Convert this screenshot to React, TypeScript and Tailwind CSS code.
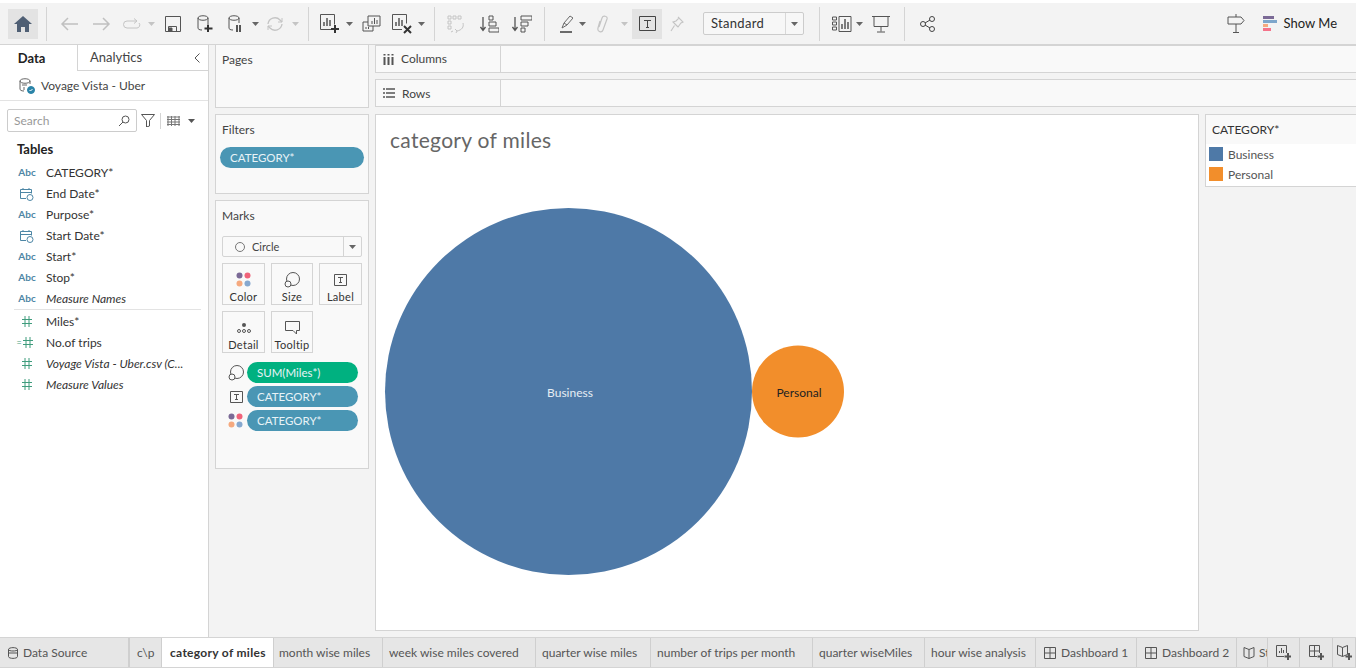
import { ReactNode } from "react";

const font = "font-['Lato','Open_Sans',sans-serif]";

const Caret = ({ className = "" }: { className?: string }) => (
    <svg width="7" height="4" viewBox="0 0 7 4" className={className}>
        <path d="M0 0h7L3.5 4z" fill="currentColor" />
    </svg>
);

const Ico = ({ w = 20, h = 20, className = "", children }: { w?: number; h?: number; className?: string; children: ReactNode }) => (
    <svg width={w} height={h} viewBox={`0 0 ${w} ${h}`} fill="none" stroke="currentColor" strokeWidth="1" className={`shrink-0 ${className}`}>
        {children}
    </svg>
);

const Sep = ({ className = "" }: { className?: string }) => <div className={`h-[34px] w-px shrink-0 bg-[#d4d4d4] ${className}`} />;

const Toolbar = () => (
    <div className="flex h-[42px] shrink-0 items-center border-b border-[#d4d4d4] bg-[#f3f3f3] text-[#555]">
        <div className="ml-[8px] flex h-[30px] w-[30px] items-center justify-center bg-[#e3e3e3] text-[#4f5f74]">
            <svg width="18" height="16" viewBox="0 0 18 16" fill="currentColor"><path d="M9 0L0 8h3v8h4v-5h4v5h4V8h3z" /></svg>
        </div>
        <Sep className="ml-[8px]" />
        <Ico w={18} h={14} className="ml-[13px] text-[#c0c0c0]"><path d="M18 7H2M8 1L2 7l6 6" strokeWidth="1.5" /></Ico>
        <Ico w={18} h={14} className="ml-[15px] text-[#c0c0c0]"><path d="M0 7h16M10 1l6 6-6 6" strokeWidth="1.5" /></Ico>
        <Ico w={18} h={12} className="ml-[12px] text-[#c4c4c4]"><path d="M13 3H4a3 3 0 000 7h10a3 3 0 002-5M11 .5L14 3l-3 2.5" /></Ico>
        <Caret className="ml-[7px] text-[#c4c4c4]" />
        <Ico w={16} h={16} className="ml-[10px] text-[#555]"><path d="M.5.5h15v15H.5zM3.5 15.5v-5h8v5" /><path d="M4 12h3v3H4z" fill="currentColor" /></Ico>
        <Ico w={16} h={18} className="ml-[16px] text-[#555]"><path d="M1 3c0-3 10-3 10 0v7M1 3c0 3 10 3 10 0M1 3v10c0 1 1 2 4 2" /><path d="M11 10v7M7.500 13.500h8" strokeWidth="2" className="text-[#333]" /></Ico>
        <Ico w={16} h={18} className="ml-[15px] text-[#555]"><path d="M1 3c0-3 10-3 10 0v5M1 3c0 3 10 3 10 0M1 3v10c0 1 1 2 4 2" /><path d="M9 10v7M12 10v7" strokeWidth="2" /></Ico>
        <Caret className="ml-[8px] text-[#666]" />
        <Ico w={18} h={16} className="ml-[7px] text-[#c4c4c4]"><path d="M2 8a7 7 0 0112-4l2 2M16 8a7 7 0 01-12 4l-2-2" strokeWidth="1.300" /><path d="M16 2v4h-4M2 14v-4h4" /></Ico>
        <Caret className="ml-[8px] text-[#c4c4c4]" />
        <Sep className="ml-[9px]" />
        <Ico w={20} h={20} className="ml-[11px] text-[#555]"><path d="M11 15.500H.5V.5h14v10" /><path d="M4 12V8M7 12V4M10 12V6" strokeWidth="1.500" /><path d="M15 11v8M11 15h8" strokeWidth="2" className="text-[#333]" /></Ico>
        <Caret className="ml-[6px] text-[#666]" />
        <Ico w={19} h={18} className="ml-[9px] text-[#555]"><path d="M6 11V1h12v10zM6 7H1v9h10v-5" /><path d="M10 9V6M12.500 9V3M15 9V5M4 14v-2M6.500 14v-2" /></Ico>
        <Ico w={20} h={20} className="ml-[11px] text-[#555]"><path d="M10 15.500H.5V.5h14v9" /><path d="M4 12V8M7 12V4M10 12V6" strokeWidth="1.500" /><path d="M12 12l7 7M19 12l-7 7" strokeWidth="2" className="text-[#333]" /></Ico>
        <Caret className="ml-[6px] text-[#666]" />
        <Sep className="ml-[9px]" />
        <Ico w={18} h={18} className="ml-[12px] text-[#c4c4c4]"><path d="M1 1h3v3H1zM6 1h3v3H6zM11 1h3v3h-3zM1 6h3v3H1zM1 11h3v3H1z" /><path d="M16 8c1 4-1 7-6 8M8 14l2 2-1 2M4 17l2-1" /></Ico>
        <Ico w={19} h={18} className="ml-[15px] text-[#555]"><path d="M3 2v13M.5 12L3 15.500 5.500 12" strokeWidth="1.300" /><path d="M9 1h4v4H9zM9 7h7v4H9zM9 13h10v4H9z" /></Ico>
        <Ico w={20} h={18} className="ml-[13px] text-[#555]"><path d="M3 2v13M.5 12L3 15.500 5.500 12" strokeWidth="1.300" /><path d="M9 1h11v4H9zM9 7h7v4H9zM9 13h4v4H9z" /></Ico>
        <Sep className="ml-[12px]" />
        <Ico w={13} h={18} className="ml-[15px] text-[#6a6a6a]"><path d="M2 13l2-5 6-7 3 2-6 7zM4 8l3 2" /><path d="M0 17h12" strokeWidth="2" /></Ico>
        <Caret className="ml-[6px] text-[#666]" />
        <Ico w={13} h={18} className="ml-[10px] text-[#c4c4c4]"><path d="M4 6l-2 7c-1 4 4 5 5 2l4-11c1-3-4-4-5-1L3 12" strokeWidth="1.200" /></Ico>
        <Caret className="ml-[12px] text-[#c4c4c4]" />
        <div className="ml-[4px] flex h-[30px] w-[30px] items-center justify-center bg-[#e3e3e3] text-[#444]">
            <Ico w={17} h={15}><path d="M.5.500h16v14H.5z" /><path d="M5 4.500h7M8.500 4.500v7M7 11.500h3" /></Ico>
        </div>
        <Ico w={14} h={16} className="ml-[8px] text-[#c4c4c4]"><path d="M8 1l5 5-2 1-3 4-1-1-1-1-3-3 3-1 3-3zM4.500 9.500L1 15" strokeWidth="1.100" /></Ico>
        <div className="ml-[19px] flex h-[23px] w-[101px] items-center rounded-[2px] border border-[#ccc] bg-[#f7f7f7] text-[13px] tracking-[0.3px] text-[#333]">
            <span className="flex-1 pl-[7px] pt-[1px]">Standard</span>
            <div className="flex h-full w-[18px] items-center justify-center border-l border-[#d8d8d8] text-[#666]"><Caret /></div>
        </div>
        <Sep className="ml-[15px]" />
        <Ico w={20} h={16} className="ml-[12px] text-[#555]"><path d="M.5 1h4v3h-4zM.5 6h4v3h-4zM.5 11h4v3h-4zM7 .5h12v15H7z" /><path d="M10 13V8M13 13V3M16 13V6" strokeWidth="1.500" /></Ico>
        <Caret className="ml-[4px] text-[#666]" />
        <Ico w={18} h={18} className="ml-[9px] text-[#555]"><path d="M0 1.500h18M2 1.500v10h14v-10M9 11.500v5M5 17h8" /></Ico>
        <Sep className="ml-[14px]" />
        <Ico w={15} h={16} className="ml-[15px] text-[#444]"><circle cx="3" cy="8" r="2.500" /><circle cx="12" cy="3" r="2.500" /><circle cx="12" cy="13" r="2.500" /><path d="M5 7l5-3M5 9l5 3" /></Ico>
        <div className="flex-1" />
        <Ico w={18} h={19} className="text-[#555]"><path d="M1 3h13l3 3.500L14 10H1zM9 0v3M9 10v8M6 18.500h6" /></Ico>
        <svg width="14" height="16" viewBox="0 0 14 16" className="ml-[18px] shrink-0">
            <rect width="11" height="3" fill="#7b6a96" />
            <rect y="4" width="14" height="3" fill="#7ea6cb" />
            <rect y="8" width="5" height="3" fill="#f5a97f" />
            <rect y="12" width="8" height="3" fill="#f5738a" />
        </svg>
        <span className="ml-[7px] mr-[19px] pt-[1px] text-[13px] text-[#222]">Show Me</span>
    </div>
);

const Field = ({ kind, label, italic }: { kind: "abc" | "date" | "num" | "calc"; label: string; italic?: boolean }) => (
    <div className="flex h-[21px] items-center">
        <div className="flex w-[46px] shrink-0 justify-center pl-[16px] pr-[8px]">
            {kind === "abc" && <span className="text-[10px] font-bold text-[#4d86a5]">Abc</span>}
            {kind === "date" && (
                <Ico w={14} h={14} className="text-[#4d86a5]"><path d="M6 11.500H.5v-9h11v4M.5 5.500h11M3 1v2M9 1v2" /><circle cx="10" cy="10.500" r="3" /></Ico>
            )}
            {(kind === "num" || kind === "calc") && (
                <div className={`flex items-center ${kind === "calc" ? "-ml-[5px]" : ""}`}>
                    {kind === "calc" && <span className="mr-px text-[9px] leading-none text-[#3f9c7d]">=</span>}
                    <Ico w={10} h={11} className="text-[#3f9c7d]"><path d="M3 0v11M7 0v11M0 3.500h10M0 7.500h10" /></Ico>
                </div>
            )}
        </div>
        <span className={`truncate text-[12px] text-[#333] ${italic ? "italic" : ""}`}>{label}</span>
    </div>
);

const Sidebar = () => (
    <div className="flex w-[209px] shrink-0 flex-col border-r border-[#d4d4d4] bg-white">
        <div className="flex h-[26px] shrink-0 items-center">
            <div className="flex h-full w-[77px] items-center justify-center pr-[14px] pt-[1px] text-[13px] font-bold text-[#222]">Data</div>
            <div className="flex h-full flex-1 items-center justify-between border-b border-l border-[#d4d4d4] pl-[12px] pr-[8px] pt-[1px] text-[13px] text-[#444]">
                Analytics
                <Ico w={6} h={10} className="text-[#555]"><path d="M5.500 .5L1 5l4.500 4.500" /></Ico>
            </div>
        </div>
        <div className="flex h-[30px] shrink-0 items-center border-b border-[#e3e3e3] pl-[19px]">
            <Ico w={16} h={16} className="text-[#666]">
                <path d="M1 3c0-3 10-3 10 0M1 3c0 3 10 3 10 0v3M1 3v8c0 1 1 2 4 2M3 7h5M5 9v3" />
                <circle cx="12" cy="12" r="3.500" fill="#2b84a8" stroke="#2b84a8" />
                <path d="M10.500 12l1 1 2-2" stroke="#fff" />
            </Ico>
            <span className="ml-[6px] text-[12px] text-[#444]">Voyage Vista - Uber</span>
        </div>
        <div className="mt-[8px] flex h-[23px] shrink-0 items-center">
            <div className="ml-[7px] flex h-full w-[130px] items-center justify-between rounded-[2px] border border-[#ccc] pl-[6px] pr-[6px] text-[12px] text-[#999]">
                Search
                <Ico w={12} h={12} className="text-[#555]"><circle cx="7.500" cy="4.500" r="3.500" /><path d="M5 7l-4 4" /></Ico>
            </div>
            <Ico w={14} h={13} className="ml-[4px] text-[#555]"><path d="M.5 .5h13L8.500 6.500V12l-3 1V6.500z" /></Ico>
            <div className="ml-[5px] h-[16px] w-px bg-[#d4d4d4]" />
            <Ico w={13} h={10} className="ml-[6px] text-[#777]"><path d="M0 1h13M0 3.500h13M0 6h13M0 8.500h13M1 0v10M4.500 0v10M8 0v10M12 0v10" /></Ico>
            <Caret className="ml-[8px] text-[#555]" />
        </div>
        <div className="mt-[7px] pl-[17px] text-[13px] font-bold leading-[20px] text-[#222]">Tables</div>
        <div className="mt-[3px]">
            <Field kind="abc" label="CATEGORY*" />
            <Field kind="date" label="End Date*" />
            <Field kind="abc" label="Purpose*" />
            <Field kind="date" label="Start Date*" />
            <Field kind="abc" label="Start*" />
            <Field kind="abc" label="Stop*" />
            <Field kind="abc" label="Measure Names" italic />
        </div>
        <div className="ml-[14px] mr-[7px] h-px bg-[#e3e3e3]" />
        <div className="mt-px pr-[8px]">
            <Field kind="num" label="Miles*" />
            <Field kind="calc" label="No.of trips" />
            <Field kind="num" label="Voyage Vista - Uber.csv (C..." italic />
            <Field kind="num" label="Measure Values" italic />
        </div>
    </div>
);

const Card = ({ title, className = "", children }: { title: string; className?: string; children?: ReactNode }) => (
    <div className={`shrink-0 border border-[#d4d4d4] bg-[#f9f9f9] ${className}`}>
        <div className="pl-[6px] pt-[6px] text-[12px] leading-[18px] text-[#444]">{title}</div>
        {children}
    </div>
);

const Pill = ({ label, color = "bg-[#4a96b4]", className = "" }: { label: string; color?: string; className?: string }) => (
    <div className={`flex h-[21px] items-center rounded-full pl-[10px] text-[11.5px] text-[#e8f3f7] ${color} ${className}`}>{label}</div>
);

const Dots = () => (
    <svg width="16" height="16" viewBox="0 0 16 16">
        <circle cx="3.500" cy="3.500" r="3" fill="#7b6a96" />
        <circle cx="11.500" cy="3.500" r="3" fill="#f0637a" />
        <circle cx="3.500" cy="11.500" r="3" fill="#f5a97f" />
        <circle cx="11.500" cy="11.500" r="3" fill="#86a8cf" />
    </svg>
);

const SizeIcon = () => (
    <Ico w={16} h={16} className="text-[#555]"><circle cx="9" cy="7" r="6.500" /><circle cx="4" cy="12" r="3" fill="#f9f9f9" /></Ico>
);

const LabelIcon = ({ className = "" }: { className?: string }) => (
    <Ico w={13} h={12} className={`text-[#555] ${className}`}><path d="M.5 .5h12v11H.5z" /><path d="M4 3.500h5M6.500 3.500v5M5 8.500h3" /></Ico>
);

const MarkButton = ({ label, icon, className = "" }: { label: string; icon: ReactNode; className?: string }) => (
    <div className={`flex h-[42px] flex-col items-center justify-end border border-[#d4d4d4] ${className}`}>
        <div className="flex h-[20px] items-center">{icon}</div>
        <span className="text-[11px] leading-[14px] tracking-[0.3px] text-[#333]">{label}</span>
    </div>
);

const Shelves = () => (
    <div className="flex w-[166px] shrink-0 flex-col gap-[6px] bg-[#f3f3f3] px-[6px]">
        <Card title="Pages" className="-mt-px h-[64px]" />
        <Card title="Filters" className="h-[80px]">
            <Pill label="CATEGORY*" className="ml-[4px] mr-[4px] mt-[8px]" />
        </Card>
        <Card title="Marks" className="h-[269px]">
            <div className="mx-[6px] mt-[11px] flex h-[21px] items-center rounded-[2px] border border-[#d4d4d4] bg-[#f9f9f9] text-[11px] text-[#444]">
                <span className="ml-[12px] h-[10px] w-[10px] rounded-full border border-[#777]" />
                <span className="ml-[7px] flex-1 pt-[1px]">Circle</span>
                <div className="flex h-full w-[18px] items-center justify-center border-l border-[#d4d4d4] text-[#666]"><Caret /></div>
            </div>
            <div className="ml-[6px] mt-[6px] grid grid-cols-[43px_42px_43px] gap-x-[6px] gap-y-[6px]">
                <MarkButton label="Color" icon={<Dots />} />
                <MarkButton label="Size" icon={<SizeIcon />} />
                <MarkButton label="Label" icon={<LabelIcon />} />
                <MarkButton
                    label="Detail"
                    icon={
                        <Ico w={14} h={12} className="text-[#555]">
                            <circle cx="7" cy="3" r="2" fill="currentColor" stroke="none" />
                            <circle cx="2" cy="9" r="1.500" /><circle cx="7" cy="9" r="1.500" /><circle cx="12" cy="9" r="1.500" />
                        </Ico>
                    }
                />
                <MarkButton
                    label="Tooltip"
                    icon={<Ico w={15} h={14} className="text-[#555]"><path d="M.5 .5h14v9h-3v3.500L8 9.500H.5z" /></Ico>}
                />
            </div>
            <div className="mt-[9px] flex flex-col gap-[3px]">
                <div className="flex items-center">
                    <div className="flex w-[31px] justify-center pl-[9px]"><SizeIcon /></div>
                    <Pill label="SUM(Miles*)" color="bg-[#00b180]" className="w-[111px]" />
                </div>
                <div className="flex items-center">
                    <div className="flex w-[31px] justify-center pl-[9px]"><LabelIcon /></div>
                    <Pill label="CATEGORY*" className="w-[111px]" />
                </div>
                <div className="flex items-center">
                    <div className="flex w-[31px] justify-center pl-[9px]"><Dots /></div>
                    <Pill label="CATEGORY*" className="w-[111px]" />
                </div>
            </div>
        </Card>
    </div>
);

const Shelf = ({ label, icon, textClass = "" }: { label: string; icon: ReactNode; textClass?: string }) => (
    <div className="flex h-[28px] shrink-0 border-y border-[#d4d4d4] border-l bg-[#f9f9f9]">
        <div className="flex w-[125px] items-center border-r border-[#d4d4d4] pl-[7px] text-[12px] text-[#444]">
            {icon}
            <span className={`ml-[7px] ${textClass}`}>{label}</span>
        </div>
    </div>
);

const Chart = () => (
    <svg viewBox="0 0 822 470" className="block h-[470px] w-[822px] shrink-0">
        <circle cx="192.500" cy="238.500" r="183.500" fill="#4e79a7" />
        <circle cx="422" cy="238.500" r="46" fill="#f28e2b" />
        <text x="194" y="244" textAnchor="middle" fontSize="12" fill="#e6edf4">Business</text>
        <text x="423" y="244" textAnchor="middle" fontSize="12" fill="#222">Personal</text>
    </svg>
);

const Legend = () => (
    <div className="h-[73px] flex-1 border-y border-l border-[#d4d4d4] bg-white">
        <div className="flex h-[29px] items-center bg-[#f9f9f9] pl-[6px] text-[12px] text-[#333]">CATEGORY*</div>
        <div className="mt-[3px] flex h-[20px] items-center pl-[3px] pb-[6px]">
            <span className="h-[14px] w-[14px] bg-[#4e79a7]" />
            <span className="ml-[5px] pt-[1px] text-[12px] text-[#555]">Business</span>
        </div>
        <div className="flex h-[20px] items-center pl-[3px] pb-[6px]">
            <span className="h-[14px] w-[14px] bg-[#f28e2b]" />
            <span className="ml-[5px] pt-[1px] text-[12px] text-[#555]">Personal</span>
        </div>
    </div>
);

const Tab = ({ w, label, icon, active, className = "pl-[6px]" }: { w: string; label: string; icon?: ReactNode; active?: boolean; className?: string }) => (
    <div className={`flex h-full shrink-0 items-center overflow-hidden whitespace-nowrap border-r border-[#cfcfcf] text-[12px] ${w} ${className} ${active ? "bg-white font-bold tracking-[0.3px] text-[#333]" : "text-[#555]"}`}>
        {icon}
        {label}
    </div>
);

const DashIcon = () => (
    <Ico w={12} h={12} className="mr-[5px] text-[#555]"><path d="M.5 .5h11v11H.5zM6 .5v11M.5 6h11" /></Ico>
);

const AddTab = ({ w, children }: { w: string; children: ReactNode }) => (
    <div className={`flex h-full shrink-0 items-center justify-center border-r border-[#cfcfcf] text-[#555] ${w}`}>{children}</div>
);

const TabBar = () => (
    <div className="flex h-[31px] shrink-0 items-stretch overflow-hidden border-y border-[#d4d4d4] bg-[#e6e6e6]">
        <div className="flex w-[130px] shrink-0 items-center border-r-2 border-[#cfcfcf] pl-[8px] text-[12px] text-[#555]">
            <Ico w={10} h={12} className="mr-[5px] text-[#555]"><path d="M.5 2.500c0-2.500 9-2.500 9 0v7c0 2.500-9 2.500-9 0zM.5 2.500c0 2 9 2 9 0M.5 6h9" /></Ico>
            Data Source
        </div>
        <Tab w="w-[32px]" label="c\p" className="pl-[7px]" />
        <Tab w="w-[112px]" label="category of miles" active className="pl-[8px]" />
        <Tab w="w-[109px]" label="month wise miles" className="pl-[5px]" />
        <Tab w="w-[153px]" label="week wise miles covered" />
        <Tab w="w-[115px]" label="quarter wise miles" />
        <Tab w="w-[162px]" label="number of trips per month" />
        <Tab w="w-[112px]" label="quarter wiseMiles" />
        <Tab w="w-[111px]" label="hour wise analysis" />
        <Tab w="w-[101px]" label="Dashboard 1" icon={<DashIcon />} className="pl-[8px]" />
        <Tab w="w-[100px]" label="Dashboard 2" icon={<DashIcon />} className="pl-[8px]" />
        <Tab
            w="w-[31px]"
            label="St"
            icon={<Ico w={12} h={12} className="mr-[4px] shrink-0 text-[#555]"><path d="M6 2.500L1 .5v9l5 2 5-2v-9zM6 2.500v9" /></Ico>}
        />
        <AddTab w="w-[32px]">
            <Ico w={15} h={15}><path d="M8 11.500H.5V.5h10V8" /><path d="M3.500 8V6M5.500 8V3M7.500 8V5" /><path d="M12 8v7M8.500 11.500h7" strokeWidth="2" /></Ico>
        </AddTab>
        <AddTab w="w-[33px]">
            <Ico w={15} h={15}><path d="M8 11.500H.5V.5h10V8M5.500 .5v11M.5 6h10" /><path d="M12 8v7M8.500 11.500h7" strokeWidth="2" /></Ico>
        </AddTab>
        <AddTab w="w-[23px]">
            <Ico w={15} h={15}><path d="M5.500 2.500L.5 .5v9l5 2 5-2v-9zM5.500 2.500v9" /><path d="M12 8v7M8.500 11.500h7" strokeWidth="2" /></Ico>
        </AddTab>
    </div>
);

export default function App() {
    return (
        <div className={`flex h-[668px] w-[1356px] flex-col overflow-hidden bg-[#f3f3f3] ${font}`}>
            <div className="h-[3px] shrink-0 bg-white" />
            <Toolbar />
            <div className="flex min-h-0 flex-1">
                <Sidebar />
                <Shelves />
                <div className="flex min-w-0 flex-1 flex-col gap-[6px]">
                    <Shelf
                        label="Columns"
                        icon={<Ico w={11} h={11} className="text-[#555]"><path d="M1.500 3v8M5.500 3v8M9.500 3v8M1.500 0v1.500M5.500 0v1.500M9.500 0v1.500" strokeWidth="2" /></Ico>}
                    />
                    <Shelf
                        label="Rows"
                        textClass="pt-[2px]"
                        icon={<Ico w={12} h={10} className="text-[#555]"><path d="M0 1h2M3 1h9M0 5h2M3 5h9M0 9h2M3 9h9" strokeWidth="1.300" /></Ico>}
                    />
                    <div className="mt-px flex gap-[6px]">
                        <div className="h-[517px] w-[824px] shrink-0 border border-[#d4d4d4] bg-white">
                            <div className="pl-[14px] pt-[12px] text-[21px] leading-[26px] tracking-[0.3px] text-[#666]">category of miles</div>
                            <Chart />
                        </div>
                        <Legend />
                    </div>
                </div>
            </div>
            <TabBar />
        </div>
    );
}
